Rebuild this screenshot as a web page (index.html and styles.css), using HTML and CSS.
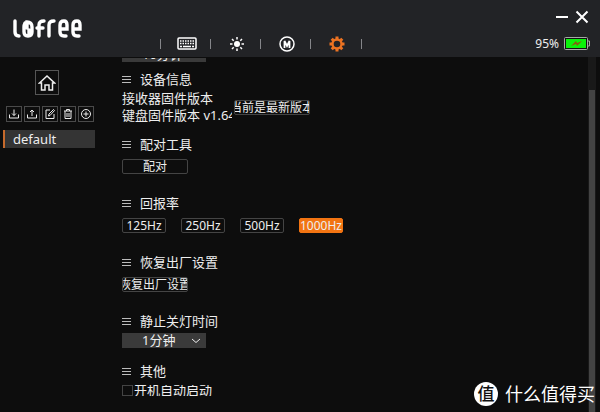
FILE: index.html
```html
<!DOCTYPE html>
<html lang="zh-CN">
<head>
    <meta charset="UTF-8">
    <meta name="viewport" content="width=device-width, initial-scale=1.0">
    <title>LOFREE</title>
    <link rel="stylesheet" href="styles.css">
</head>
<body>
    <header class="topbar">
        <svg class="logo" viewBox="0 0 70 20" role="img" aria-label="Lofree">
            <path d="M3 2V13Q3 17 7 17M13 4Q12 6 12 8V13Q12 17 16 17Q20 17 20 13V8Q20 3 15 3V9M17 11V17M27 17V6Q27 2 32 2M25 9H31M37 17V6Q37 2 42 2M54 17H52Q48 17 48 13V6Q48 2 52 2Q55 2 55 6V10H49M67 17H65Q61 17 61 13V6Q61 2 65 2Q68 2 68 6V10H62"/>
        </svg>
        <nav class="tabs">
            <a href="#" aria-label="键盘">
                <svg width="20" height="14" viewBox="0 0 20 14">
                    <rect x="1" y="1" width="18" height="11" rx="1"/>
                    <path d="M3 4H17M3 6.5H17" stroke-dasharray="1.5 1"/>
                    <path d="M3 9.5H5M6 9.5H14M15 9.5H17"/>
                </svg>
            </a>
            <a href="#" aria-label="灯光">
                <svg width="16" height="16" viewBox="0 0 16 16">
                    <circle cx="8" cy="8" r="3" fill="currentColor" stroke="none"/>
                    <path d="M8 1V3.5M8 12.5V15M1 8H3.5M12.5 8H15M3 3L4.7 4.7M11.3 11.3L13 13M13 3L11.3 4.7M4.7 11.3L3 13"/>
                </svg>
            </a>
            <a href="#" aria-label="宏">
                <svg width="16" height="16" viewBox="0 0 16 16">
                    <circle cx="8" cy="8" r="7"/>
                    <path d="M5.5 12V5L8 10L10.5 5V12" stroke-width="1.8"/>
                </svg>
            </a>
            <a href="#" class="active" aria-label="设置">
                <svg width="16" height="16" viewBox="0 0 16 16">
                    <circle cx="8" cy="8" r="4.5" stroke-width="2.4"/>
                    <path d="M8 .5V3M8 13V15.5M.5 8H3M13 8H15.5M2.7 2.7L4.5 4.5M11.5 11.5L13.3 13.3M13.3 2.7L11.5 4.5M4.5 11.5L2.7 13.3" stroke-width="3"/>
                </svg>
            </a>
        </nav>
        <div class="window-side">
            <div class="window-buttons">
                <button type="button" aria-label="最小化">
                    <svg width="14" height="14" viewBox="0 0 14 14"><path d="M1 7H13"/></svg>
                </button>
                <button type="button" aria-label="关闭">
                    <svg width="14" height="14" viewBox="0 0 14 14"><path d="M1.5 1.5L12.5 12.5M12.5 1.5L1.5 12.5"/></svg>
                </button>
            </div>
            <div class="battery">
                <span>95%</span>
                <svg width="26" height="14" viewBox="0 0 26 14">
                    <rect x=".5" y=".5" width="23" height="12" rx="1" fill="#111" stroke="#a4aaa4"/>
                    <rect x="2" y="2" width="20" height="9" fill="#0af20a" stroke="none"/>
                    <path d="M24 4H25.5V9H24" fill="none" stroke="#a4aaa4"/>
                    <path d="M7 9L12 4L13 6L18 4L13 9L12 7Z" fill="#8a5a10" stroke="none"/>
                </svg>
            </div>
        </div>
    </header>

    <div class="layout">
        <aside class="sidebar">
            <button type="button" class="home" aria-label="主页">
                <svg width="18" height="18" viewBox="0 0 18 18"><path d="M1.5 9L9 2L16.5 9H14.5V16H11V11H7V16H3.5V9Z"/></svg>
            </button>
            <div class="tools">
                <button type="button" aria-label="导入"><svg width="12" height="12" viewBox="0 0 12 12"><path d="M1.5 6.5V10H10.5V6.5M6 1.5V7.5M4 5.5L6 7.5L8 5.5"/></svg></button>
                <button type="button" aria-label="导出"><svg width="12" height="12" viewBox="0 0 12 12"><path d="M1.5 6.5V10H10.5V6.5M6 8V2M4 4L6 2L8 4"/></svg></button>
                <button type="button" aria-label="编辑"><svg width="12" height="12" viewBox="0 0 12 12"><path d="M6 2H2V10.5H10V6M4.5 8L5 6L9.5 1.5L10.5 2.5L6 7.5Z"/></svg></button>
                <button type="button" aria-label="删除"><svg width="12" height="12" viewBox="0 0 12 12"><path d="M2 3H10M4.5 3V1.5H7.5V3M3 3V10.5H9V3M5 5V9M7 5V9"/></svg></button>
                <button type="button" aria-label="新增"><svg width="12" height="12" viewBox="0 0 12 12"><circle cx="6" cy="6" r="4.5"/><path d="M3.5 6H8.5M6 3.5V8.5"/></svg></button>
            </div>
            <a href="#" class="profile">default</a>
        </aside>

        <main class="settings">
            <div class="scrolled">
                <select class="dropdown" aria-label="休眠时间"><option>10分钟</option></select>
            </div>

            <section class="device">
                <h2>设备信息</h2>
                <div class="firmware">
                    <div class="versions">
                        <p>接收器固件版本</p>
                        <p>键盘固件版本 v1.64</p>
                    </div>
                    <button type="button" class="btn latest"><span>当前是最新版本</span></button>
                </div>
            </section>

            <section>
                <h2>配对工具</h2>
                <button type="button" class="btn">配对</button>
            </section>

            <section>
                <h2>回报率</h2>
                <div class="rates">
                    <button type="button" class="btn rate">125Hz</button>
                    <button type="button" class="btn rate">250Hz</button>
                    <button type="button" class="btn rate">500Hz</button>
                    <button type="button" class="btn rate active">1000Hz</button>
                </div>
            </section>

            <section>
                <h2>恢复出厂设置</h2>
                <button type="button" class="btn"><span>恢复出厂设置</span></button>
            </section>

            <section class="compact">
                <h2><label for="lightTime">静止关灯时间</label></h2>
                <div class="select-wrap">
                    <select class="dropdown" id="lightTime"><option>1分钟</option></select>
                    <svg class="chevron" width="10" height="6" viewBox="0 0 10 6"><path d="M1 1L5 4.5L9 1"/></svg>
                </div>
            </section>

            <section class="compact">
                <h2>其他</h2>
                <label class="check"><input type="checkbox"><span>开机自动启动</span></label>
            </section>
        </main>

        <div class="scrollbar"><div class="thumb"></div></div>
    </div>

    <div class="watermark">
        <span class="badge">值</span>
        <span>什么值得买</span>
    </div>
</body>
</html>
```
FILE: styles.css
```css
* {
    box-sizing: border-box;
}

body {
    margin: 0;
    height: 100vh;
    display: flex;
    flex-direction: column;
    overflow: hidden;
    background-color: #0d0d0d;
    color: #eee;
    font-family: "Noto Sans", "Noto Sans CJK SC", sans-serif;
    font-size: 13px;
    line-height: 17px;
}

button {
    padding: 0;
    border: none;
    background: none;
    color: inherit;
    font: inherit;
    cursor: pointer;
}

svg {
    display: block;
    flex: none;
    fill: none;
    stroke: currentColor;
}

.topbar {
    flex: none;
    display: grid;
    grid-template-columns: 160px 1fr 100px;
    height: 57px;
    background-color: #222326;
}

.logo {
    width: 70px;
    height: 20px;
    margin: 19px 0 0 12px;
    color: #fff;
    stroke-width: 3.4;
    stroke-linecap: round;
}

.tabs {
    display: flex;
    align-self: end;
    height: 26px;
    align-items: center;
}

.tabs a {
    display: flex;
    justify-content: center;
    align-items: center;
    width: 50px;
    height: 10px;
    padding-left: 2px;
    border-left: 1px solid #85868a;
    color: #fff;
}

.tabs a:last-child {
    width: 52px;
    border-right: 1px solid #85868a;
}

.tabs a.active {
    color: #ec7322;
}

.tabs svg {
    stroke-width: 1.5;
}

.window-side {
    padding: 10px 10px 0 0;
}

.window-buttons {
    display: flex;
    justify-content: flex-end;
    gap: 6px;
    margin-right: 1px;
    color: #fff;
}

.window-buttons svg {
    stroke-width: 2;
}

.battery {
    display: flex;
    justify-content: flex-end;
    align-items: center;
    gap: 5px;
    margin-top: 11px;
    font-size: 12px;
}

.layout {
    flex: 1;
    display: flex;
    min-height: 0;
}

.sidebar {
    width: 122px;
    flex: none;
    padding: 13px 27px 0 3px;
}

.home {
    display: grid;
    place-items: center;
    width: 24px;
    height: 25px;
    margin-left: 32px;
    border: 1px solid #555;
}

.home svg {
    stroke-width: 1.5;
}

.tools {
    display: flex;
    gap: 2px;
    margin: 11px 0 8px 3px;
}

.tools button {
    display: grid;
    place-items: center;
    width: 16px;
    height: 16px;
    border: 1px solid #4a4a4a;
}

.profile {
    display: block;
    height: 18px;
    padding-left: 8px;
    border-left: 2px solid #c66a2c;
    background-color: #343434;
    color: #eee;
    font-size: 13px;
    line-height: 18px;
    text-decoration: none;
}

.settings {
    flex: 1;
    min-width: 0;
    overflow: hidden;
}

.scrolled {
    display: flex;
    align-items: flex-end;
    height: 4px;
    margin: 1px 0 9px;
    overflow: hidden;
}

section {
    margin-bottom: 21px;
}

h2 {
    display: flex;
    align-items: center;
    gap: 9px;
    margin: 0 0 6px;
    font-size: 13px;
    font-weight: 400;
}

h2::before {
    content: "";
    width: 9px;
    height: 7px;
    background: repeating-linear-gradient(#bbb 0 1px, transparent 1px 3px);
}

.device {
    margin-bottom: 12px;
}

.device h2 {
    margin-bottom: 2px;
}

.compact {
    margin-bottom: 15px;
}

.compact h2 {
    margin-bottom: 3px;
}

.firmware {
    display: flex;
    align-items: center;
    gap: 2px;
}

.versions {
    width: 110px;
    overflow: hidden;
    white-space: nowrap;
}

.versions p {
    margin: 0;
}

.btn {
    display: flex;
    justify-content: center;
    align-items: center;
    width: 66px;
    height: 15px;
    border: 1px solid #444;
    border-radius: 2px;
    overflow: hidden;
    font-size: 12px;
    line-height: 15px;
    white-space: nowrap;
}

.btn span {
    flex: none;
}

.btn.latest {
    width: 76px;
}

.rates {
    display: flex;
    gap: 15px;
}

.btn.rate {
    width: 44px;
}

.btn.rate.active {
    border-color: #f27412;
    background-color: #f27412;
}

.dropdown {
    flex: none;
    width: 84px;
    height: 15px;
    padding: 0 20px;
    border: none;
    border-radius: 0;
    appearance: none;
    background-color: #3a3a3a;
    color: #eee;
    font: inherit;
    line-height: 15px;
}

.scrolled .dropdown {
    padding-bottom: 1px;
}

.select-wrap {
    display: flex;
    align-items: center;
}

.chevron {
    margin-left: -15px;
    pointer-events: none;
}

.check {
    display: flex;
    align-items: center;
    gap: 1px;
    height: 11px;
    overflow: hidden;
}

.check input {
    appearance: none;
    width: 11px;
    height: 11px;
    margin: 0;
    border: 1px solid #444;
}

.compact .check {
    margin-top: 5px;
}

.scrollbar {
    width: 8px;
    flex: none;
    margin-right: 4px;
    padding: 33px 1px 0;
    background-color: #191919;
}

.thumb {
    height: 100%;
    background-color: #434343;
}

.watermark {
    position: absolute;
    right: 5px;
    bottom: 6px;
    display: flex;
    align-items: center;
    gap: 7px;
    color: #fff;
    font-size: 18px;
    line-height: 24px;
}

.badge {
    width: 24px;
    height: 24px;
    border-radius: 50%;
    background-color: #fff;
    color: #111;
    font-size: 17px;
    font-weight: 500;
    text-align: center;
}
```
